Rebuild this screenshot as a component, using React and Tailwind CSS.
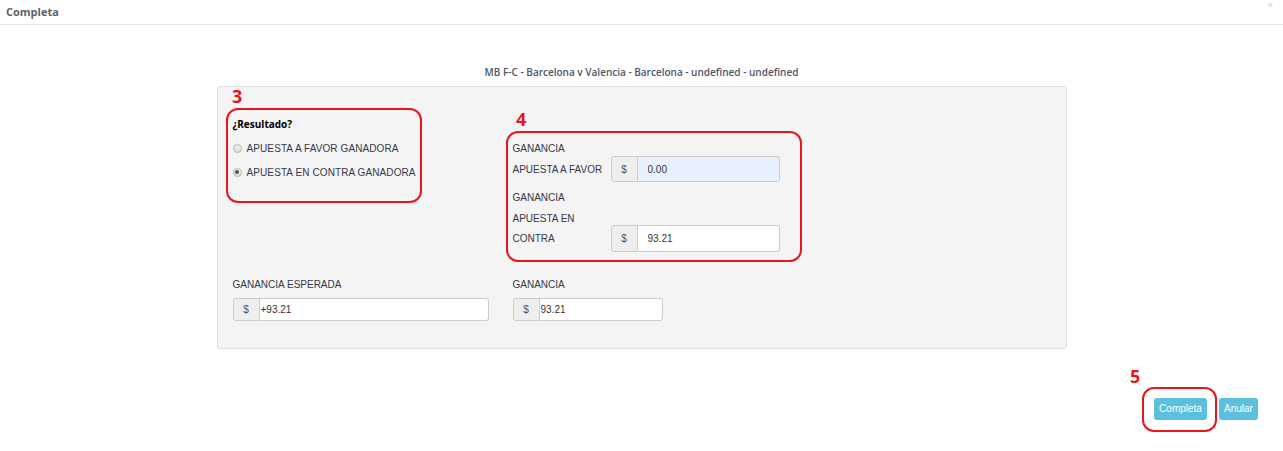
import React from 'react';

const sans = "font-['Liberation_Sans',Arial,sans-serif]";
const open = "font-['Open_Sans','Noto_Sans',sans-serif]";

const Radio = ({ checked, label }) => (
  <label className="flex items-center h-[24px] gap-[5px]">
    <span className="w-[9px] h-[9px] rounded-full border border-[#b5b5b5] bg-gradient-to-b from-[#f2f2f2] to-[#dcdcdc] flex items-center justify-center">
      {checked && <span className="w-[4px] h-[4px] rounded-full bg-[#555]" />}
    </span>
    <span className={`${sans} text-[10px] text-[#343949] tracking-[0.1px]`}>{label}</span>
  </label>
);

const MoneyInput = ({ value, width, height, filled, padded }) => (
  <div className={`flex ${width} ${height}`}>
    <span className={`${sans} w-[27px] shrink-0 flex items-center justify-center text-[10px] text-[#555] bg-[#eeeeee] border border-[#cccccc] rounded-l-[3px]`}>$</span>
    <input
      readOnly
      value={value}
      className={`${sans} min-w-0 flex-1 text-[10px] text-[#333] border border-l-0 border-[#cccccc] rounded-r-[3px] outline-none ${filled ? 'bg-[#e8f0fe]' : 'bg-white'} ${padded ? 'pl-[10px]' : 'pl-[1px]'}`}
    />
  </div>
);

const Mark = ({ n, className }) => (
  <span className={`absolute ${open} font-bold text-[18px] leading-none text-[#e8151c] ${className}`}>{n}</span>
);

const Box = ({ className }) => (
  <div className={`absolute border-2 border-[#e8151c] rounded-[12px] pointer-events-none ${className}`} />
);

export default function App() {
  return (
    <div className="relative w-[1283px] h-[451px] bg-white overflow-hidden">
      <div className="h-[25px] border-b border-[#e6e6e6] flex items-center justify-between pl-[6px] pr-[10px]">
        <span className={`${open} font-bold text-[11px] text-[#5b5f6b]`}>Completa</span>
        <span className={`${sans} text-[9px] text-[#d0d0d0] -mt-[12px]`}>×</span>
      </div>

      <div className={`${open} font-semibold text-[10px] text-[#4f5568] text-center mt-[40px] leading-[14px]`}>
        MB F-C - Barcelona v Valencia - Barcelona - undefined - undefined
      </div>

      <div className="mx-auto mt-[7px] w-[850px] bg-[#f4f4f4] border border-[#e0e0e0] rounded-[3px] pl-[15px] pt-[27px] pb-[27px]">
        <div className="flex">
          <div className="w-[280px]">
            <div className={`${open} font-bold text-[10px] text-black leading-[20px]`}>¿Resultado?</div>
            <div className="mt-[2px]">
              <Radio label="APUESTA A FAVOR GANADORA" />
              <Radio checked label="APUESTA EN CONTRA GANADORA" />
            </div>
          </div>
          <div className={`${sans} text-[10px] text-[#343949] mt-[24px] flex flex-col gap-[6px]`}>
            <div className="flex items-end">
              <div className="w-[98px] leading-[21px] pb-[2px]">GANANCIA<br />APUESTA A FAVOR</div>
              <MoneyInput value="0.00" width="w-[169px]" height="h-[26px]" filled padded />
            </div>
            <div className="flex items-end">
              <div className="w-[98px] leading-[20.5px] pb-[2px]">GANANCIA<br />APUESTA EN<br />CONTRA</div>
              <MoneyInput value="93.21" width="w-[169px]" height="h-[27px]" padded />
            </div>
          </div>
        </div>

        <div className={`${sans} text-[10px] text-[#343949] flex mt-[23px]`}>
          <div className="w-[280px]">
            <div className="leading-[20px]">GANANCIA ESPERADA</div>
            <div className="mt-[3px]">
              <MoneyInput value="+93.21" width="w-[256px]" height="h-[23px]" />
            </div>
          </div>
          <div>
            <div className="leading-[20px]">GANANCIA</div>
            <div className="mt-[3px]">
              <MoneyInput value="93.21" width="w-[150px]" height="h-[23px]" />
            </div>
          </div>
        </div>
      </div>

      <div className="flex justify-end gap-[12px] pr-[25px] mt-[49px]">
        <button className={`${sans} h-[22px] w-[53px] rounded-[3px] bg-[#5bc0de] text-white text-[10px]`}>Completa</button>
        <button className={`${sans} h-[22px] w-[39px] rounded-[3px] bg-[#5bc0de] text-white text-[10px]`}>Anular</button>
      </div>

      <Mark n="3" className="left-[232px] top-[87px]" />
      <Box className="left-[226px] top-[108px] w-[196px] h-[95px]" />
      <Mark n="4" className="left-[516px] top-[110px]" />
      <Box className="left-[506px] top-[131px] w-[296px] h-[131px]" />
      <Mark n="5" className="left-[1130px] top-[367px]" />
      <Box className="left-[1142px] top-[387px] w-[75px] h-[45px]" />
    </div>
  );
}
